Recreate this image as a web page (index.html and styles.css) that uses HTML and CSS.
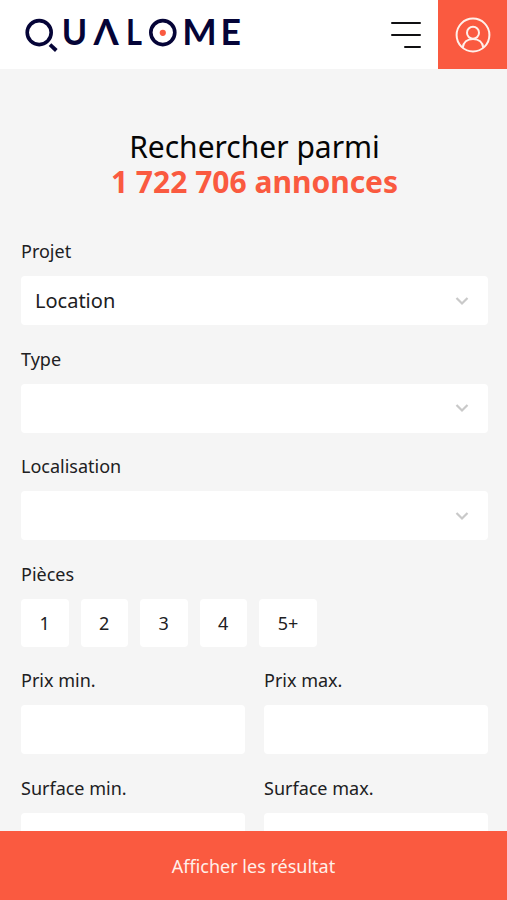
FILE: index.html
```html
<!DOCTYPE html>
<html lang="fr">
<head>
<meta charset="utf-8">
<title>Qualome</title>
<link rel="stylesheet" href="styles.css">
</head>
<body>
<div class="app">
  <header class="header">
    <a class="brand">
      <svg class="logo" width="220" height="40" viewBox="22 14 220 40" role="img" aria-label="Qualome">
        <circle class="ring" cx="39.2" cy="32.6" r="12"/>
        <path class="tail" d="M50 44.6L56.3 50.5"/>
        <text class="letter" x="61.7" y="45.3" textLength="25.4" lengthAdjust="spacingAndGlyphs">U</text>
        <text class="letter" x="93.6" y="45.3" textLength="25.2" lengthAdjust="spacingAndGlyphs">Λ</text>
        <text class="letter" x="126" y="45.3" textLength="16" lengthAdjust="spacingAndGlyphs">L</text>
        <circle class="ring" cx="162.8" cy="32.6" r="12"/>
        <circle class="dot" cx="162.8" cy="32.8" r="3.1"/>
        <text class="letter" x="182.2" y="45.3" textLength="34.5" lengthAdjust="spacingAndGlyphs">M</text>
        <text class="letter" x="220.5" y="45.3" textLength="20.5" lengthAdjust="spacingAndGlyphs">E</text>
      </svg>
    </a>
    <div class="menu"><span></span><span></span><span class="short"></span></div>
    <div class="account">
      <svg width="36" height="36" viewBox="0 0 36 36">
        <circle cx="18" cy="18" r="16.4"/>
        <circle cx="18" cy="15.8" r="6"/>
        <path d="M7.7 30.7C8.3 25.2 12.3 21.9 18 21.9S27.700 25.200 28.300 30.700"/>
      </svg>
    </div>
  </header>
  <main class="search">
    <h1 class="title">Rechercher parmi<strong>1 722 706 annonces</strong></h1>
    <div class="field">
      <div class="label">Projet</div>
      <div class="box">Location<svg class="chevron" width="14" height="10" viewBox="0 0 14 10"><path d="M1.500 2L7 7.500L12.500 2"/></svg></div>
    </div>
    <div class="field">
      <div class="label">Type</div>
      <div class="box"><svg class="chevron" width="14" height="10" viewBox="0 0 14 10"><path d="M1.500 2L7 7.500L12.500 2"/></svg></div>
    </div>
    <div class="field">
      <div class="label">Localisation</div>
      <div class="box"><svg class="chevron" width="14" height="10" viewBox="0 0 14 10"><path d="M1.500 2L7 7.500L12.500 2"/></svg></div>
    </div>
    <div class="field rooms">
      <div class="label">Pièces</div>
      <div class="options"><span>1</span><span>2</span><span>3</span><span>4</span><span class="wide">5+</span></div>
    </div>
    <div class="pair">
      <div class="field"><div class="label">Prix min.</div><div class="box"></div></div>
      <div class="field"><div class="label">Prix max.</div><div class="box"></div></div>
    </div>
    <div class="pair">
      <div class="field"><div class="label">Surface min.</div><div class="box"></div></div>
      <div class="field"><div class="label">Surface max.</div><div class="box"></div></div>
    </div>
  </main>
  <footer class="submit">Afficher les résultat</footer>
</div>
</body>
</html>
```

FILE: styles.css
```css
* { box-sizing: border-box; }
body { margin: 0; background: #f5f5f5; color: #202022; font-family: "Noto Sans", sans-serif; }
.app { display: flex; flex-direction: column; height: 900px; overflow: hidden; }
.header { display: flex; flex: none; height: 69px; background: #fff; }
.brand { flex: 1; padding: 14px 0 0 22px; }
.logo { display: block; }
.ring { fill: none; stroke: #050437; stroke-width: 3.6; }
.tail { fill: none; stroke: #050437; stroke-width: 3.8; }
.dot { fill: #fa5a40; }
.letter { fill: #050437; font: 700 35.500px Lato, sans-serif; }
.menu { display: flex; flex-direction: column; align-items: flex-end; gap: 9.500px; width: 30px; margin-right: 17px; padding-top: 21.500px; }
.menu span { width: 30px; height: 2.600px; border-radius: 1px; background: #101012; }
.menu .short { width: 17px; }
.account { display: flex; align-items: center; justify-content: center; width: 69px; background: #fa5a40; }
.account svg { fill: none; stroke: #fff0ea; stroke-width: 2; }
.search { flex: 1; min-height: 0; overflow: hidden; padding: 60px 19px 0 21px; }
.title { margin: 0 0 39px; font-size: 30px; line-height: 35px; font-weight: 400; text-align: center; color: #050505; }
.title strong { display: block; font-weight: 700; color: #fa5a40; }
.field { margin-bottom: 20.500px; }
.label { height: 26px; margin-bottom: 12px; font-size: 18px; line-height: 26px; }
.box { display: flex; align-items: center; height: 49px; padding: 0 19px 0 14px; border-radius: 4px; background: #fff; font-size: 20px; }
.chevron { margin-left: auto; fill: none; stroke: #c9c9c9; stroke-width: 2.200; }
.options { display: flex; gap: 12px; }
.options span { display: flex; align-items: center; justify-content: center; width: 47.500px; height: 48px; border-radius: 4px; background: #fff; font-size: 18px; }
.options .wide { width: 58px; }
.pair { display: grid; grid-template-columns: 1fr 1fr; gap: 19px; }
.submit { display: flex; flex: none; align-items: center; justify-content: center; height: 69px; background: #fa5a40; color: #fff0ea; font-size: 18px; }
```
